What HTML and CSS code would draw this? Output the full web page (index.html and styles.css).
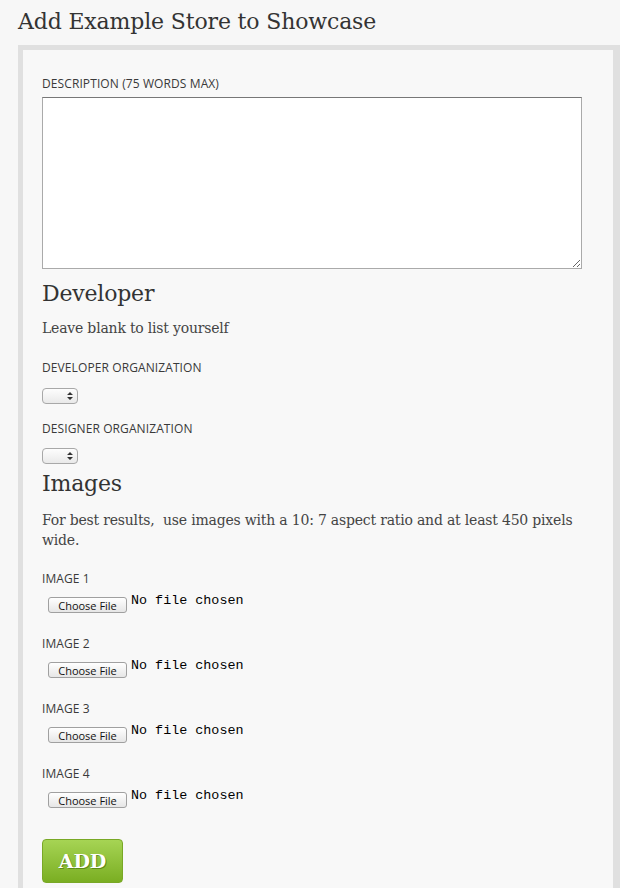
FILE: index.html
```html
<!DOCTYPE html>
<html>
<head>
<meta charset="utf-8">
<link rel="stylesheet" href="styles.css">
</head>
<body>
<div class="page">
  <h1 class="title">Add Example Store to Showcase</h1>
  <form class="panel">
    <label class="lbl lbl-first">Description (75 words max)</label>
    <textarea class="desc"></textarea>

    <h2 class="heading h-dev">Developer</h2>
    <p class="note">Leave blank to list yourself</p>

    <label class="lbl lbl-org1">Developer Organization</label>
    <select class="sel"><option></option></select>

    <label class="lbl lbl-org2">Designer Organization</label>
    <select class="sel"><option></option></select>

    <h2 class="heading h-img">Images</h2>
    <p class="note note-img">For best results, &nbsp;use images with a 10: 7 aspect ratio and at least 450 pixels wide.</p>

    <label class="lbl lbl-img1">Image 1</label>
    <div class="file"><span class="fbtn">Choose File</span><span class="ftxt">No file chosen</span></div>
    <label class="lbl lbl-img">Image 2</label>
    <div class="file"><span class="fbtn">Choose File</span><span class="ftxt">No file chosen</span></div>
    <label class="lbl lbl-img">Image 3</label>
    <div class="file"><span class="fbtn">Choose File</span><span class="ftxt">No file chosen</span></div>
    <label class="lbl lbl-img">Image 4</label>
    <div class="file"><span class="fbtn">Choose File</span><span class="ftxt">No file chosen</span></div>

    <button type="button" class="add">ADD</button>
  </form>
</div>
</body>
</html>
```

FILE: styles.css
```css
html, body {
  margin: 0;
  padding: 0;
  background: #f7f7f7;
}
.page {
  padding: 0 0 0 18px;
}
.title {
  margin: 0;
  padding-top: 8px;
  height: 37px;
  font-family: "DejaVu Serif", serif;
  font-weight: normal;
  font-size: 22px;
  line-height: 28px;
  color: #333;
  letter-spacing: -0.15px;
}
.panel {
  display: flex;
  flex-direction: column;
  align-items: flex-start;
  border: 5px solid #e0e0e0;
  border-right-width: 7px;
  background: #f8f8f8;
  padding: 27px 0 8px 19px;
  box-sizing: border-box;
  width: 602px;
}
.lbl {
  display: block;
  font-family: "Open Sans", "DejaVu Sans", sans-serif;
  font-size: 12px;
  line-height: 14px;
  text-transform: uppercase;
  color: #3a3a3a;
  letter-spacing: 0.1px;
}
.desc {
  margin-top: 6px;
  width: 540px;
  height: 172px;
  box-sizing: border-box;
  border: 1px solid #aaa;
  border-top-color: #777;
  background: #fff;
  resize: vertical;
  padding: 2px;
}
.heading {
  margin: 0;
  font-family: "DejaVu Serif", serif;
  font-weight: normal;
  font-size: 22px;
  line-height: 28px;
  color: #333;
  letter-spacing: -0.2px;
}
.h-dev { margin-top: 11px; }
.h-img { margin-top: 6px; }
.note {
  margin: 10px 0 0;
  font-family: "DejaVu Serif", serif;
  font-size: 14px;
  line-height: 20px;
  color: #444;
  letter-spacing: -0.2px;
}
.note-img {
  margin-top: 12px;
  width: 545px;
}
.lbl-org1 { margin-top: 23px; }
.lbl-org2 { margin-top: 18px; }
.sel {
  margin-top: 13px;
  width: 36px;
  height: 16px;
  box-sizing: border-box;
  border: 1px solid #a8a8a8;
  border-radius: 4px;
  -webkit-appearance: none;
  appearance: none;
  padding: 0;
  font-size: 10px;
  background-image:
    url("data:image/svg+xml;utf8,<svg xmlns='http://www.w3.org/2000/svg' width='6' height='8'><path d='M3 0 L6 3 H0 Z M0 5 H6 L3 8 Z' fill='%23333'/></svg>"),
    linear-gradient(#fdfdfd, #e9e9e9);
  background-repeat: no-repeat;
  background-position: 24px 3px, 0 0;
}
.lbl-org2 + .sel { margin-top: 12px; }
.lbl-img1 { margin-top: 22px; }
.lbl-img { margin-top: 24px; }
.file {
  display: flex;
  align-items: flex-start;
  margin-top: 11px;
  margin-left: 6px;
  height: 16px;
}
.fbtn {
  display: inline-block;
  height: 16px;
  width: 79px;
  text-align: center;
  box-sizing: border-box;
  padding: 0;
  border: 1px solid #a0a0a0;
  border-radius: 3px;
  background: linear-gradient(#ffffff, #e6e6e6);
  font-family: "Open Sans", "DejaVu Sans", sans-serif;
  font-size: 11px;
  line-height: 15px;
  color: #111;
}
.ftxt {
  margin-left: 4px;
  margin-top: -4px;
  font-family: "Liberation Mono", monospace;
  font-size: 13.4px;
  line-height: 16px;
  color: #000;
}
.add {
  margin-top: 31px;
  width: 81px;
  height: 44px;
  border: 1px solid #79a826;
  border-radius: 4px;
  background: linear-gradient(#a6d454, #7aae22);
  font-family: "DejaVu Serif", serif;
  font-weight: bold;
  font-size: 19px;
  color: #fff;
  text-shadow: 1px 1px 0 #5e8a18;
  padding: 0;
  cursor: pointer;
}
```
